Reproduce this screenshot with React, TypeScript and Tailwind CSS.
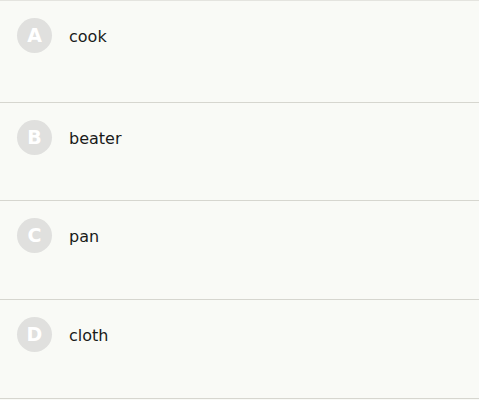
import * as React from "react";

interface Choice {
  letter: string;
  label: string;
  height: string;
}

const choices: Choice[] = [
  { letter: "A", label: "cook", height: "h-[102px]" },
  { letter: "B", label: "beater", height: "h-[98px]" },
  { letter: "C", label: "pan", height: "h-[99px]" },
  { letter: "D", label: "cloth", height: "h-[99px]" },
];

export default function App() {
  return (
    <div
      className="w-[479px] h-[400px] bg-[#f9faf6] border-t border-[#e4e4df]"
      style={{ fontFamily: '"DejaVu Sans", Verdana, sans-serif' }}
    >
      {choices.map((c) => (
        <div
          key={c.letter}
          className={`${c.height} border-b border-[#d6d6cf] pt-[17px] pl-[17px]`}
        >
          <div className="flex items-center gap-[17px]">
            <div className="w-[35px] h-[35px] rounded-full bg-[#e0e0de] flex items-center justify-center text-white text-[19px] font-bold leading-none">
              {c.letter}
            </div>
            <span className="mt-[3px] text-[16px] text-[#1a1a1a] leading-none">
              {c.label}
            </span>
          </div>
        </div>
      ))}
    </div>
  );
}
